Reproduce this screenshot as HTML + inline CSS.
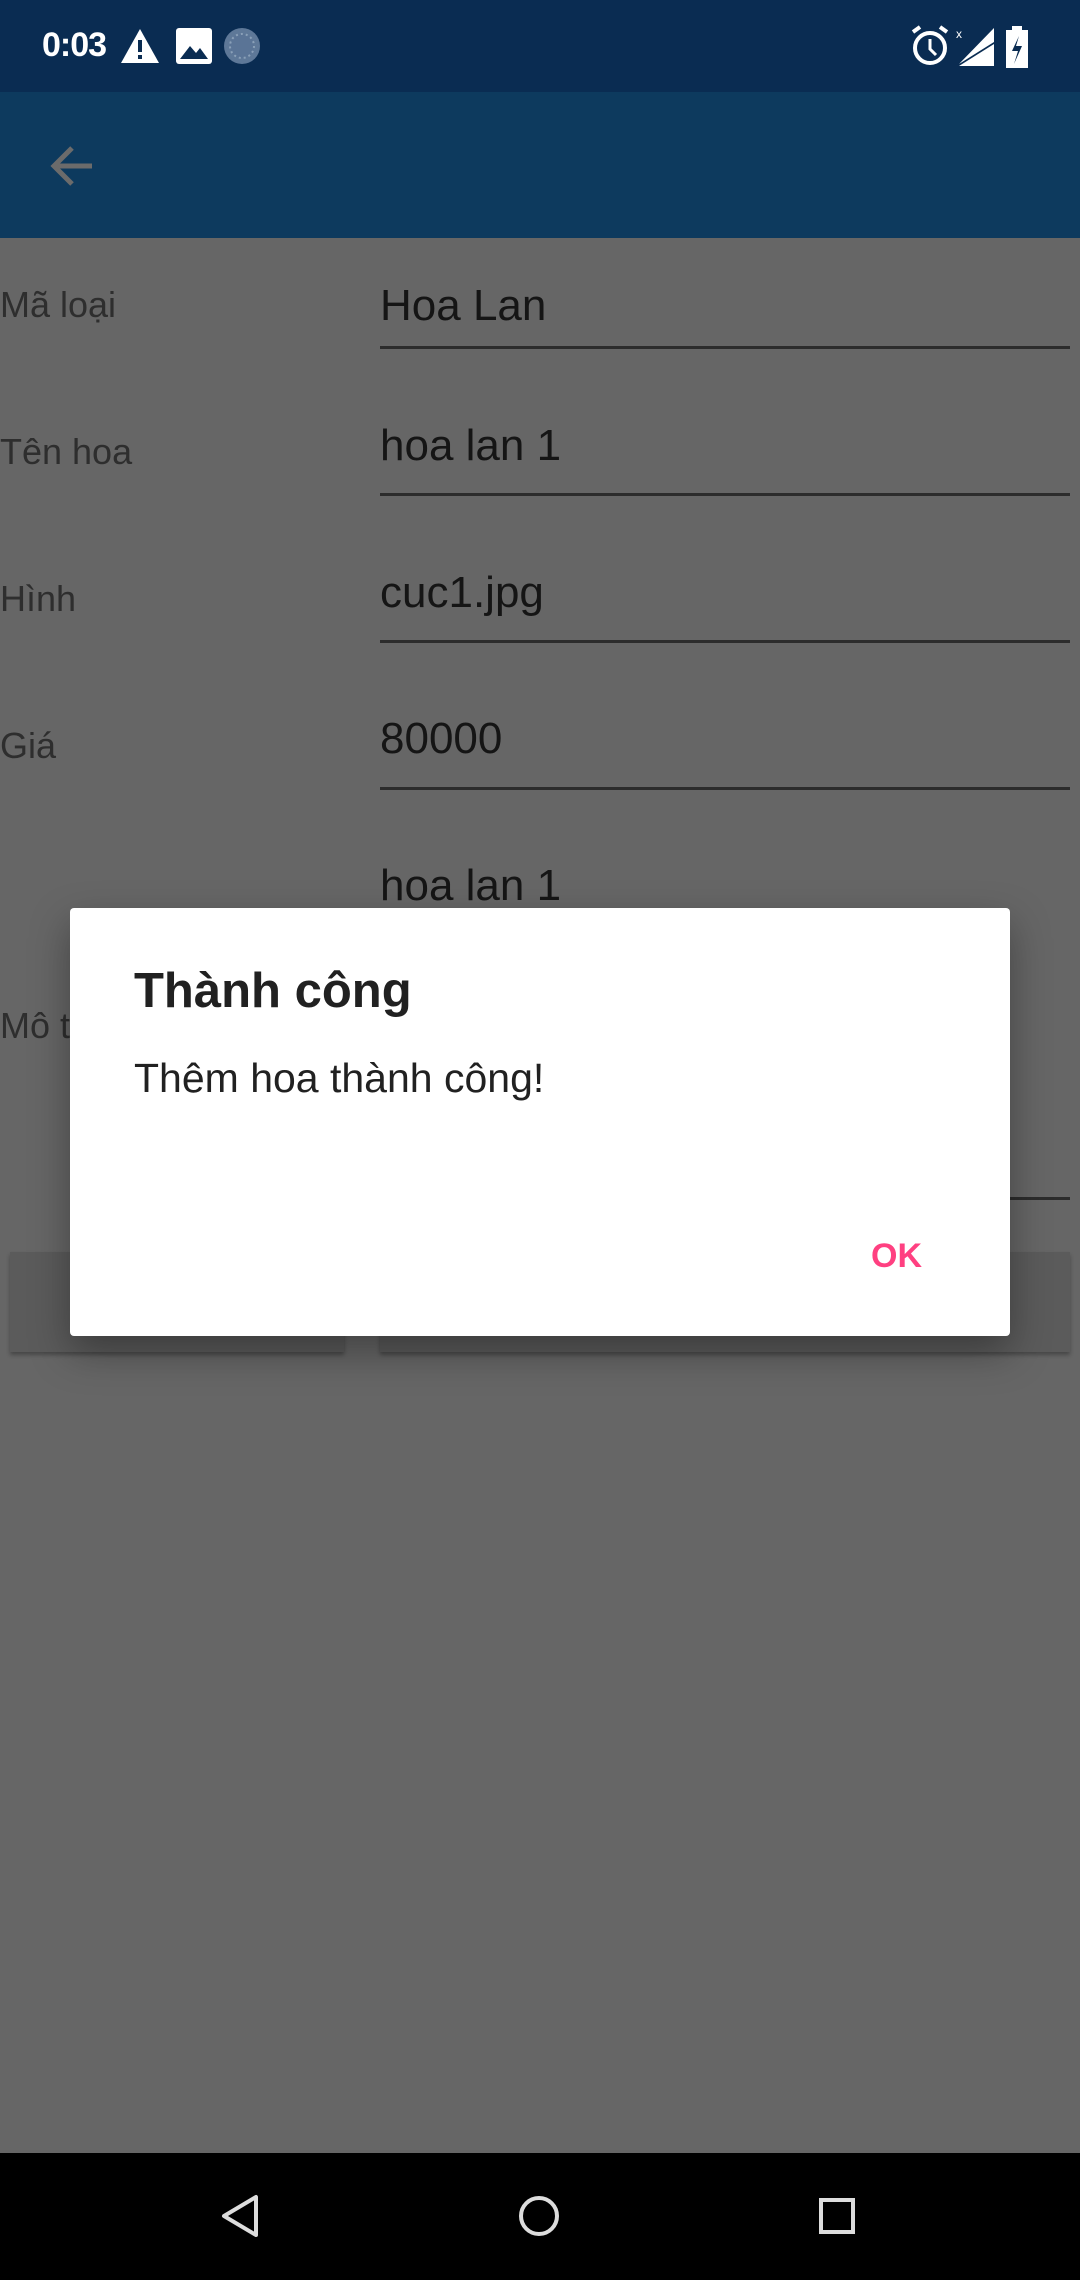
<!DOCTYPE html>
<html><head><meta charset="utf-8"><style>
html,body{margin:0;padding:0;width:1080px;height:2280px;overflow:hidden;background:#666;font-family:"Liberation Sans",sans-serif;position:relative}
.abs{position:absolute}
.lbl{position:absolute;left:0;font-size:36px;color:#2e2e2e;line-height:1}
.val{position:absolute;left:380px;font-size:44px;color:#151515;line-height:1}
.ul{position:absolute;left:380px;width:690px;height:3px;background:#2c2c2c}
</style></head><body>
<div class="abs" style="left:0;top:0;width:1080px;height:92px;background:#0a2c52"></div>
<div class="abs" style="left:0;top:92px;width:1080px;height:146px;background:#0d3a5e"></div>
<div class="abs" style="left:42px;top:26px;color:#fff;font-size:34px;font-weight:bold;letter-spacing:-1px">0:03</div>
<svg class="abs" style="left:120px;top:26px" width="140" height="42" viewBox="0 0 140 42">
<polygon points="20,3 39,37 1,37" fill="#fff"/><rect x="18" y="14" width="4" height="12" fill="#0a2c52"/><rect x="18" y="29" width="4" height="4" fill="#0a2c52"/>
<rect x="56" y="2" width="36" height="36" rx="3" fill="#fff"/><polygon points="60,33 70,20 76,27 80,22 88,33" fill="#0a2c52"/>
<circle cx="122" cy="20" r="18" fill="#5e7898"/><circle cx="122" cy="20" r="12" fill="#5a7496" stroke="#8aa0b8" stroke-width="2" stroke-dasharray="2 3"/>
</svg>
<svg class="abs" style="left:908px;top:24px" width="130" height="45" viewBox="0 0 130 45">
<circle cx="22" cy="24" r="15" fill="none" stroke="#fff" stroke-width="4"/><path d="M22 15v10l6 6" stroke="#fff" stroke-width="3" fill="none"/><path d="M5 8l7-5M39 8l-7-5" stroke="#fff" stroke-width="4"/>
<text x="48" y="14" fill="#fff" font-size="12" font-family="Liberation Sans">x</text>
<polygon points="86,4 86,18 51,40" fill="#fff"/><polygon points="86,20 86,42 51,42" fill="#fff"/>
<rect x="98" y="6" width="22" height="38" fill="#fff"/><rect x="104" y="2" width="10" height="5" fill="#fff"/><polygon points="111,12 104,27 110,27 106,40 114,22 108,22" fill="#0a2c52"/>
</svg>
<svg class="abs" style="left:48px;top:142px" width="48" height="48" viewBox="0 0 48 48"><path d="M44 24H8M24 6L6 24l18 18" stroke="#6b6b6b" stroke-width="5" fill="none"/></svg>

<div class="lbl" style="top:287px">Mã loại</div><div class="val" style="top:284px">Hoa Lan</div><div class="ul" style="top:346px"></div>
<div class="lbl" style="top:434px">Tên hoa</div><div class="val" style="top:424px">hoa lan 1</div><div class="ul" style="top:493px"></div>
<div class="lbl" style="top:581px">Hình</div><div class="val" style="top:571px">cuc1.jpg</div><div class="ul" style="top:640px"></div>
<div class="lbl" style="top:728px">Giá</div><div class="val" style="top:717px">80000</div><div class="ul" style="top:787px"></div>
<div class="val" style="top:864px">hoa lan 1</div>
<div class="lbl" style="top:1008px">Mô tả</div>
<div class="ul" style="top:1197px"></div>
<div class="abs" style="left:10px;top:1252px;width:334px;height:100px;background:#5b5b5b;box-shadow:0 3px 4px rgba(0,0,0,.3)"></div>
<div class="abs" style="left:380px;top:1252px;width:690px;height:100px;background:#5b5b5b;box-shadow:0 3px 4px rgba(0,0,0,.3)"></div>

<div class="abs" style="left:70px;top:908px;width:940px;height:428px;background:#fff;border-radius:4px;box-shadow:0 16px 40px rgba(0,0,0,.35)">
<div class="abs" style="left:64px;top:55px;font-size:49px;font-weight:bold;color:#212121">Thành công</div>
<div class="abs" style="left:64px;top:147px;font-size:41px;color:#212121">Thêm hoa thành công!</div>
<div class="abs" style="left:801px;top:329px;font-size:34px;font-weight:bold;color:#ff4081">OK</div>
</div>

<div class="abs" style="left:0;top:2153px;width:1080px;height:127px;background:#000"></div>
<svg class="abs" style="left:0;top:2153px" width="1080" height="127" viewBox="0 0 1080 127">
<polygon points="256,44 256,82 224,63" fill="none" stroke="#ddd" stroke-width="4" stroke-linejoin="round"/>
<circle cx="539" cy="63" r="18" fill="none" stroke="#ddd" stroke-width="4"/>
<rect x="821" y="47" width="32" height="32" fill="none" stroke="#ddd" stroke-width="4"/>
</svg>
</body></html>
